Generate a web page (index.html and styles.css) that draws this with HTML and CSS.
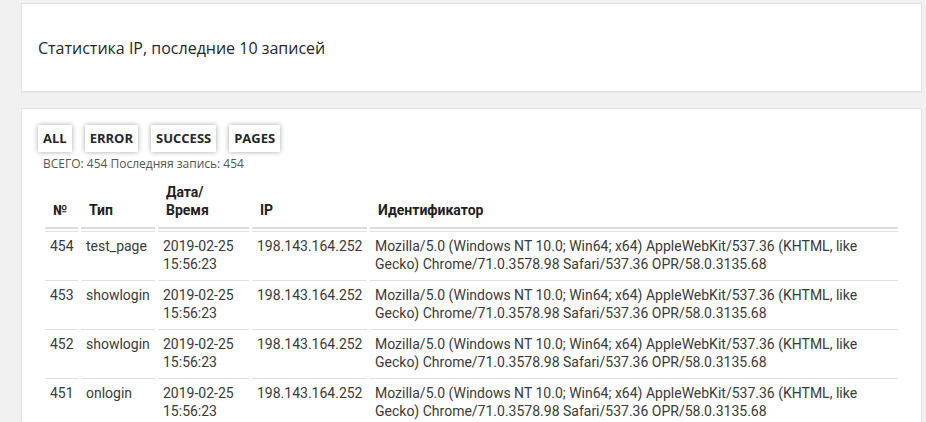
FILE: index.html
```html
<!DOCTYPE html>
<html lang="ru">
<head>
<meta charset="utf-8">
<title>Статистика IP</title>
<link rel="stylesheet" href="styles.css">
</head>
<body>
<div class="page">
  <section class="panel panel-title">
    <h2 class="title">Статистика IP, последние 10 записей</h2>
  </section>
  <section class="panel panel-stats">
    <div class="filters">
      <button class="filter">ALL</button>
      <button class="filter">ERROR</button>
      <button class="filter">SUCCESS</button>
      <button class="filter">PAGES</button>
    </div>
    <div class="table-wrap">
      <div class="summary">ВСЕГО: 454 Последняя запись: 454</div>
      <table class="log">
        <colgroup>
          <col class="c-num"><col class="c-type"><col class="c-date"><col class="c-ip"><col class="c-agent">
        </colgroup>
        <thead>
          <tr><th>№</th><th>Тип</th><th>Дата/<br>Время</th><th>IP</th><th>Идентификатор</th></tr>
        </thead>
        <tbody>
          <tr><td>454</td><td>test_page</td><td>2019-02-25 15:56:23</td><td>198.143.164.252</td><td>Mozilla/5.0 (Windows NT 10.0; Win64; x64) AppleWebKit/537.36 (KHTML, like Gecko) Chrome/71.0.3578.98 Safari/537.36 OPR/58.0.3135.68</td></tr>
          <tr><td>453</td><td>showlogin</td><td>2019-02-25 15:56:23</td><td>198.143.164.252</td><td>Mozilla/5.0 (Windows NT 10.0; Win64; x64) AppleWebKit/537.36 (KHTML, like Gecko) Chrome/71.0.3578.98 Safari/537.36 OPR/58.0.3135.68</td></tr>
          <tr><td>452</td><td>showlogin</td><td>2019-02-25 15:56:23</td><td>198.143.164.252</td><td>Mozilla/5.0 (Windows NT 10.0; Win64; x64) AppleWebKit/537.36 (KHTML, like Gecko) Chrome/71.0.3578.98 Safari/537.36 OPR/58.0.3135.68</td></tr>
          <tr><td>451</td><td>onlogin</td><td>2019-02-25 15:56:23</td><td>198.143.164.252</td><td>Mozilla/5.0 (Windows NT 10.0; Win64; x64) AppleWebKit/537.36 (KHTML, like Gecko) Chrome/71.0.3578.98 Safari/537.36 OPR/58.0.3135.68</td></tr>
        </tbody>
      </table>
    </div>
  </section>
</div>
</body>
</html>
```
FILE: styles.css
```css
html, body {
  margin: 0;
  padding: 0;
  background: #f1f1f1;
  overflow: hidden;
}
body {
  font-family: "Open Sans", "Noto Sans", sans-serif;
  color: #23282d;
}
.page {
  display: flex;
  flex-direction: column;
  gap: 16px;
  padding: 3px 4px 0 21px;
}
.panel {
  background: #fff;
  border: 1px solid #e2e2e2;
  box-shadow: 0 1px 1px rgba(0,0,0,0.04);
}
.panel-title {
  padding: 34px 16px 33px;
}
.title {
  margin: 0;
  font-size: 16px;
  line-height: 20px;
  font-weight: 400;
  color: #23282d;
}
.panel-stats {
  padding: 16px 16px 20px;
}
.filters {
  display: flex;
  gap: 13px;
}
.filter {
  font-family: "Open Sans", "Noto Sans", sans-serif;
  font-size: 13px;
  font-weight: 700;
  line-height: 17px;
  color: #23282d;
  background: #fff;
  border: 0;
  padding: 5px 5px;
  box-shadow: 0 0 5px rgba(0,0,0,0.35);
  cursor: pointer;
}
.table-wrap {
  padding: 3px 4px 0;
}
.summary {
  font-size: 12px;
  line-height: 17px;
  color: #555;
  padding-left: 1px;
}
.log {
  width: 100%;
  border-collapse: separate;
  border-spacing: 3px 2px;
  table-layout: fixed;
  font-family: Roboto, "Liberation Sans", sans-serif;
  font-size: 14px;
  line-height: 18px;
}
.c-num { width: 33px; }
.c-type { width: 74px; }
.c-date { width: 91px; }
.c-ip { width: 115px; }
.log th {
  text-align: left;
  vertical-align: bottom;
  font-weight: 700;
  color: #222;
  padding: 9px 4px 8px 8px;
  border-bottom: 2px solid #dcdcdc;
}
.log td {
  vertical-align: top;
  color: #3a3a3a;
  padding: 5px 3px 5px 5px;
  border-top: 1px solid #e0e0e0;
  overflow-wrap: break-word;
}
```
